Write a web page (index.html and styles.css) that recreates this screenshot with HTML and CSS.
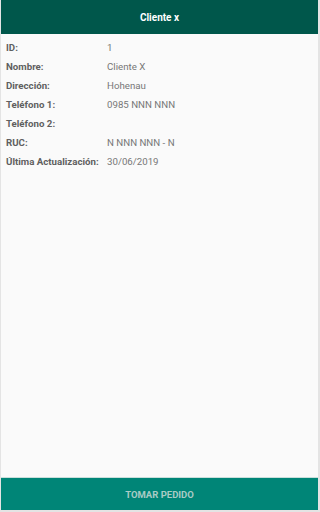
FILE: index.html
```html
<!DOCTYPE html>
<html lang="es">
<head>
<meta charset="utf-8">
<title>Cliente x</title>
<link rel="stylesheet" href="styles.css">
</head>
<body>
<div class="app">
  <header class="topbar">Cliente x</header>
  <main class="content">
    <div class="row"><span class="label">ID:</span><span class="value">1</span></div>
    <div class="row"><span class="label">Nombre:</span><span class="value">Cliente X</span></div>
    <div class="row"><span class="label">Dirección:</span><span class="value">Hohenau</span></div>
    <div class="row"><span class="label">Teléfono 1:</span><span class="value">0985 NNN NNN</span></div>
    <div class="row"><span class="label">Teléfono 2:</span><span class="value"></span></div>
    <div class="row"><span class="label">RUC:</span><span class="value">N NNN NNN - N</span></div>
    <div class="row"><span class="label">Última Actualización:</span><span class="value">30/06/2019</span></div>
  </main>
  <button class="action">TOMAR PEDIDO</button>
</div>
</body>
</html>
```

FILE: styles.css
```css
html, body {
  margin: 0;
  padding: 0;
  background: #e4e4e4;
  font-family: Roboto, "Liberation Sans", sans-serif;
}
.app {
  height: 510px;
  margin: 0 2px 0 1px;
  display: flex;
  flex-direction: column;
  background: #fafafa;
}
.topbar {
  height: 34px;
  background: #00574b;
  color: #ffffff;
  font-weight: bold;
  font-size: 10px;
  display: flex;
  align-items: center;
  justify-content: center;
}
.content {
  flex: 1;
  padding: 4px 5px 0 5px;
  display: flex;
  flex-direction: column;
}
.row {
  display: grid;
  grid-template-columns: 101px 1fr;
  height: 19px;
  align-items: center;
  font-size: 9.7px;
}
.label {
  color: #5f5f5f;
  font-weight: bold;
}
.value {
  color: #777777;
}
.action {
  height: 33px;
  border: none;
  border-top: 1px solid #c9dfdb;
  background: #008577;
  color: #a9cbc5;
  font-family: Roboto, "Liberation Sans", sans-serif;
  font-weight: bold;
  font-size: 9.5px;
  padding: 0;
  margin: 0;
}
```
